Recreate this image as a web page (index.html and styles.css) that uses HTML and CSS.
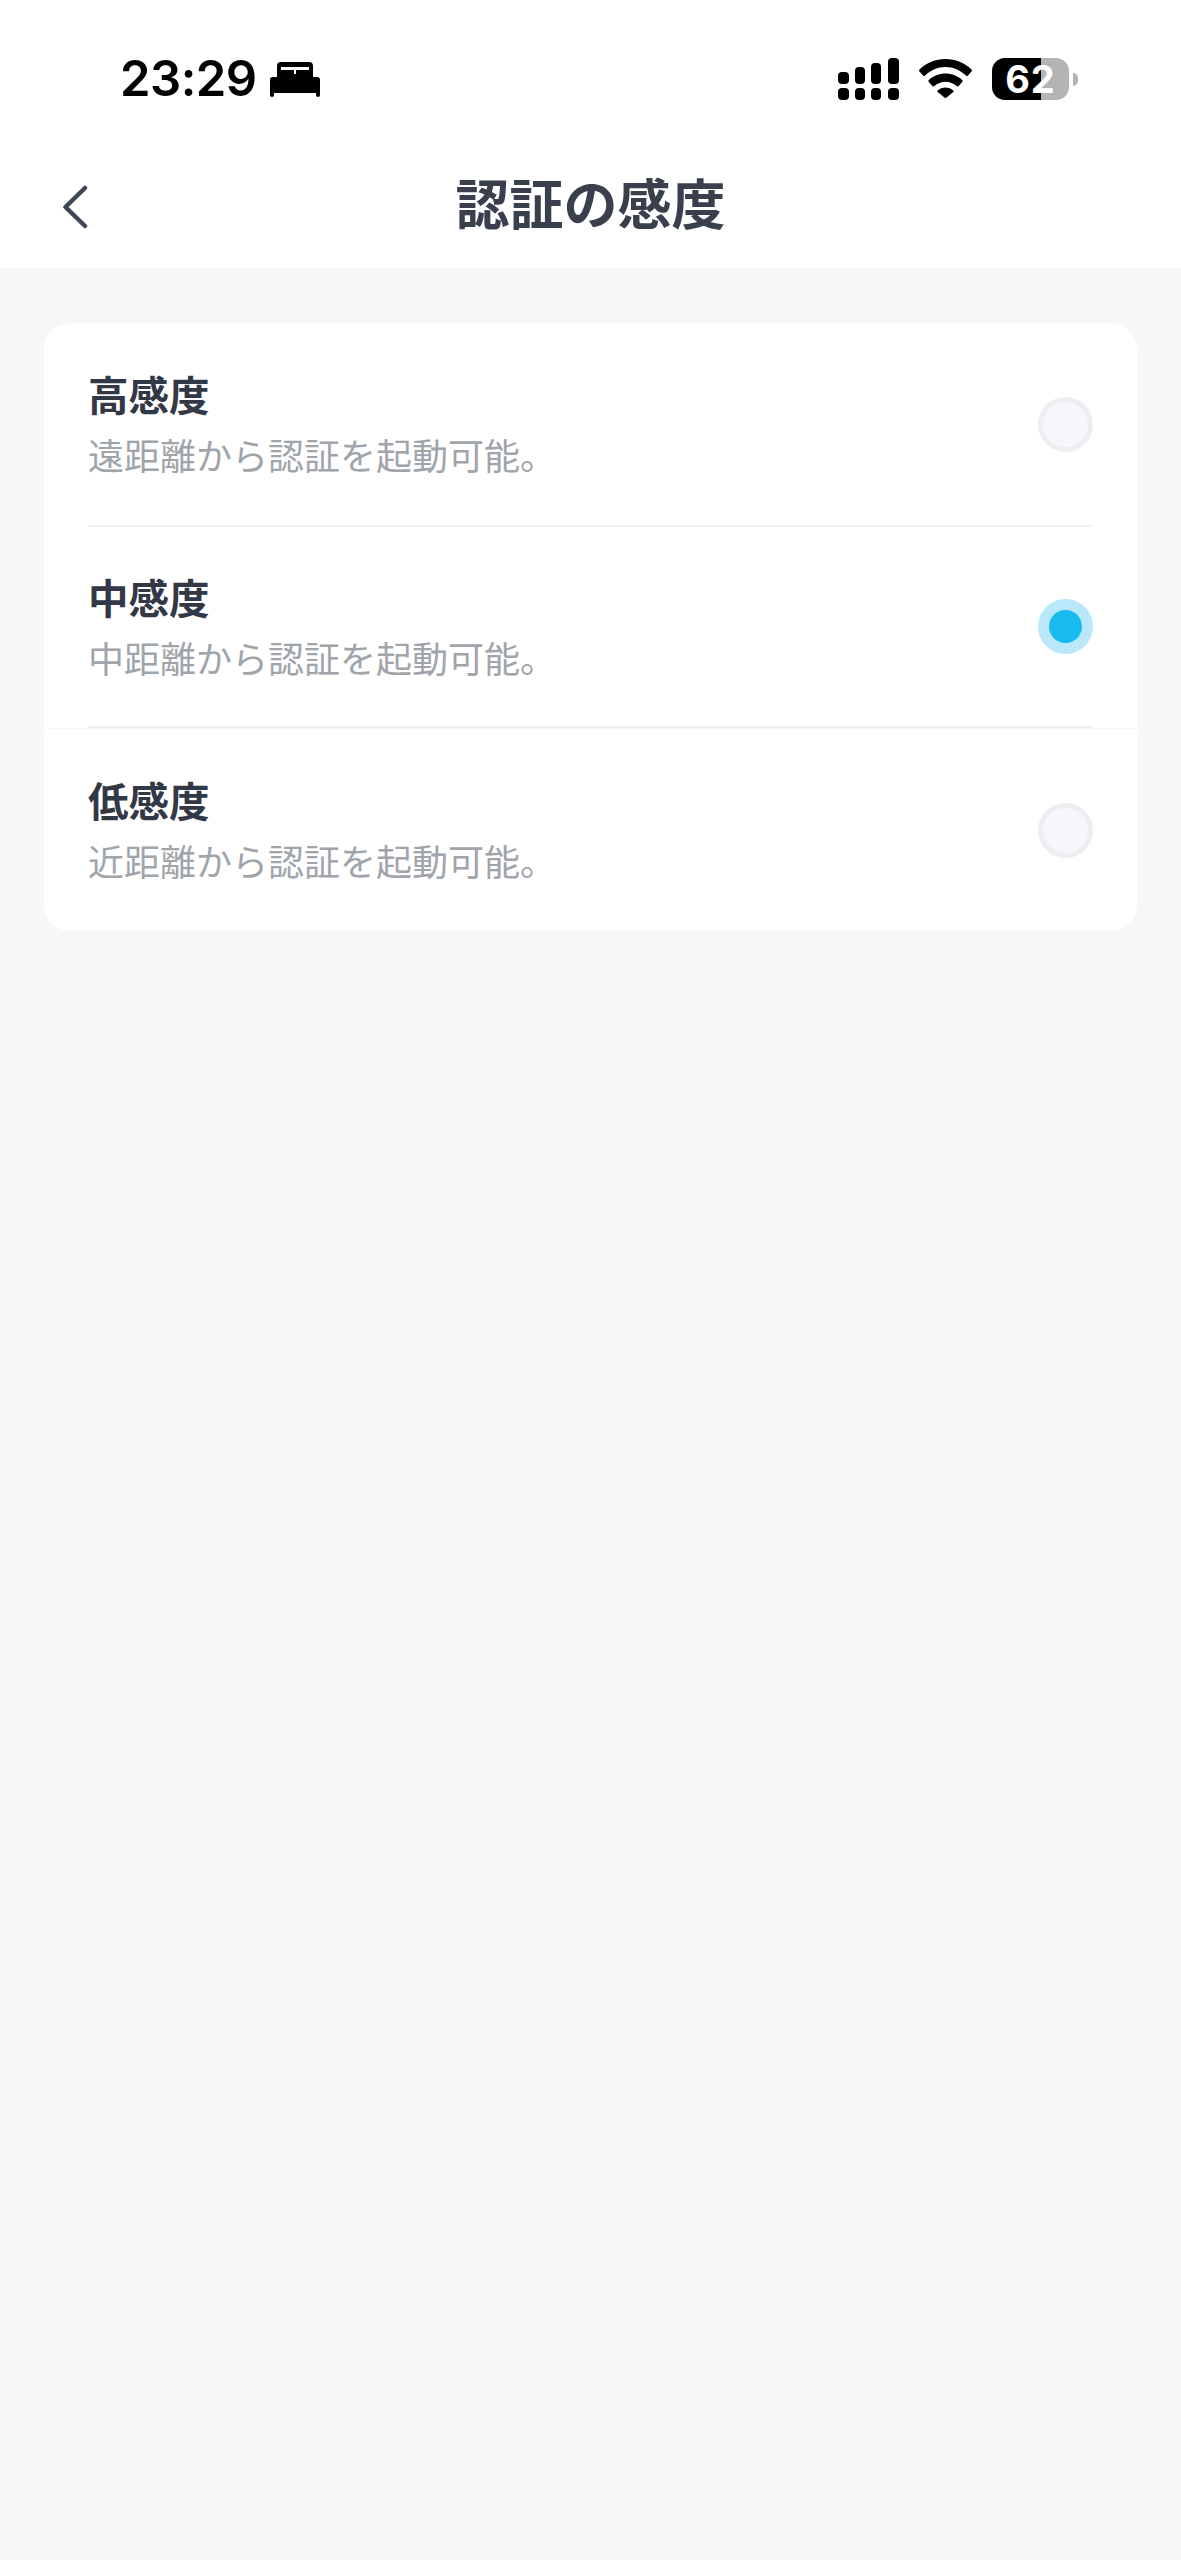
FILE: index.html
```html
<!DOCTYPE html>
<html lang="ja">
<head>
  <meta charset="UTF-8" />
  <meta name="viewport" content="width=device-width, initial-scale=1.0"/>
  <title>認証の感度</title>
  <link rel="stylesheet" href="styles.css">
</head>
<body>
<header class="top">
  <!-- status bar -->
  <div class="status">
    <div class="status-left">
      <span class="time">23:29</span>
      <svg class="bed" width="50" height="35" viewBox="0 0 50 35">
        <path fill-rule="evenodd" d="M7 15V4a4 4 0 0 1 4-4h28a4 4 0 0 1 4 4v11zM11 5v3h13v4h2V8h13V5z"/>
        <path d="M3 15h44a3 3 0 0 1 3 3v15a2 2 0 0 1-4 0v-2H4v2a2 2 0 0 1-4 0V18a3 3 0 0 1 3-3z"/>
      </svg>
    </div>
    <div class="status-right">
      <svg width="61" height="42" viewBox="0 0 61 42">
        <rect x="0" y="14" width="11" height="12" rx="4"/>
        <rect x="17" y="9" width="10" height="17" rx="4"/>
        <rect x="33" y="5" width="10" height="21" rx="4"/>
        <rect x="50" y="0" width="11" height="26" rx="4"/>
        <rect x="0" y="30" width="11" height="12" rx="4"/>
        <rect x="17" y="30" width="10" height="12" rx="4"/>
        <rect x="33" y="30" width="10" height="12" rx="4"/>
        <rect x="50" y="30" width="11" height="12" rx="4"/>
      </svg>
      <svg class="wifi" width="53" height="39" viewBox="0 0 53 39">
        <path d="M26.500 0C16.500 0 7.500 3.800 0.500 10.500a1.500 1.500 0 0 0 0 2L4 16.500a1.500 1.500 0 0 0 2.200 0C11.600 11.200 18.700 8 26.500 8s14.900 3.200 20.300 8.500a1.500 1.500 0 0 0 2.200 0l3.500-4a1.500 1.500 0 0 0 0-2C45.500 3.800 36.500 0 26.500 0z"/>
        <path d="M26.500 14.500c-6.500 0-12.300 2.500-16.700 6.500a1.500 1.500 0 0 0 0 2.100l3.500 3.900a1.500 1.500 0 0 0 2.100.1c3-2.700 6.900-4.400 11.100-4.400s8.100 1.700 11.100 4.400a1.500 1.500 0 0 0 2.100-.1l3.500-3.900a1.500 1.500 0 0 0 0-2.100c-4.400-4-10.200-6.500-16.700-6.500z"/>
        <path d="M26.500 28.500c-3 0-5.700 1.100-7.800 2.900a1.200 1.200 0 0 0 0 1.700l6.700 5.400a1.600 1.600 0 0 0 2.200 0l6.700-5.400a1.200 1.200 0 0 0 0-1.700c-2.100-1.800-4.800-2.900-7.800-2.900z"/>
      </svg>
      <div class="battery">
        <div class="battery-body">62</div>
        <div class="battery-nub"></div>
      </div>
    </div>
  </div>
  <!-- nav bar -->
  <div class="nav">
    <svg class="back" width="26" height="44" viewBox="0 0 26 44">
      <path d="M23 3 3.500 22 23 41" fill="none" stroke="#3f4756" stroke-width="4.500" stroke-linecap="round" stroke-linejoin="round"/>
    </svg>
    <h1>認証の感度</h1>
  </div>
</header>

<main class="content">
  <div class="card">
    <div class="row first">
      <div class="row-in">
        <div class="row-text">
          <h3>高感度</h3>
          <p>遠距離から認証を起動可能。</p>
        </div>
        <span class="radio"></span>
      </div>
    </div>
    <div class="row mid">
      <div class="row-in">
        <div class="row-text">
          <h3>中感度</h3>
          <p>中距離から認証を起動可能。</p>
        </div>
        <span class="radio on"></span>
      </div>
    </div>
    <div class="row last">
      <div class="row-in">
        <div class="row-text">
          <h3>低感度</h3>
          <p>近距離から認証を起動可能。</p>
        </div>
        <span class="radio"></span>
      </div>
    </div>
  </div>
</main>
</body>
</html>
```

FILE: styles.css
```css
* { margin: 0; padding: 0; box-sizing: border-box; }
html, body {
  height: 100%; background: #f7f7f7; overflow: hidden;
  font-family: "Noto Sans CJK JP", "Noto Sans", sans-serif;
}
.top { background: #fff; height: 268px; }
.status {
  height: 142px; padding: 16px 0 0 120px;
  display: flex; align-items: center; justify-content: space-between;
}
.status-left { display: flex; align-items: center; gap: 13px; }
.time {
  font-family: Inter, sans-serif; font-size: 49px; font-weight: 600;
  line-height: 60px; color: #000; letter-spacing: -0.5px;
}
.status-right {
  display: flex; align-items: center; gap: 20px; padding-right: 103px;
}
.wifi { margin-top: -2px; }
.battery { display: flex; align-items: center; gap: 4px; }
.battery-body {
  width: 77px; height: 42px; border-radius: 13px;
  background: linear-gradient(to right, #000 64%, #b4b4b4 64%);
  color: #fff; font-family: Inter, sans-serif; font-size: 38px; font-weight: 700;
  line-height: 42px; text-align: center; letter-spacing: 1px;
}
.battery-nub {
  width: 5px; height: 13px; background: #b4b4b4;
  border-radius: 0 5px 5px 0;
}
.nav {
  height: 126px; padding-left: 62px; position: relative;
  display: flex; align-items: center;
}
.back { margin-top: 3px; }
.nav h1 {
  position: absolute; left: 0; right: 0; top: 25px; text-align: center;
  font-size: 54px; font-weight: 700; color: #3a3f4d; line-height: 70px;
}
.content { padding: 55px 44px 0; }
.card { background: #fff; border-radius: 26px; overflow: hidden; }
.row { padding: 0 44px; }
.row.first { height: 204px; }
.row.mid { height: 202px; border-bottom: 1px solid #f7f7f8; }
.row.last { height: 202px; }
.row-in {
  height: 100%; border-bottom: 2px solid #f1f1f3;
  display: flex; align-items: center; justify-content: space-between;
}
.row.last .row-in { border-bottom: none; }
.row-text { margin-bottom: 1px; }
.row-text h3 {
  font-size: 40.5px; font-weight: 700; color: #333847; line-height: 60px; margin-bottom: 1px;
}
.row-text p {
  font-size: 36px; font-weight: 400; color: #9fa5aa; line-height: 58px;
}
.radio {
  width: 55px; height: 55px; border-radius: 50%;
  background: #f6f7fa; border: 5px solid #eceef1;
  display: flex; align-items: center; justify-content: center;
}
.radio.on { background: #b8e8f9; border: none; }
.radio.on::after {
  content: ""; width: 33px; height: 33px; border-radius: 50%; background: #18bbee;
}
```
